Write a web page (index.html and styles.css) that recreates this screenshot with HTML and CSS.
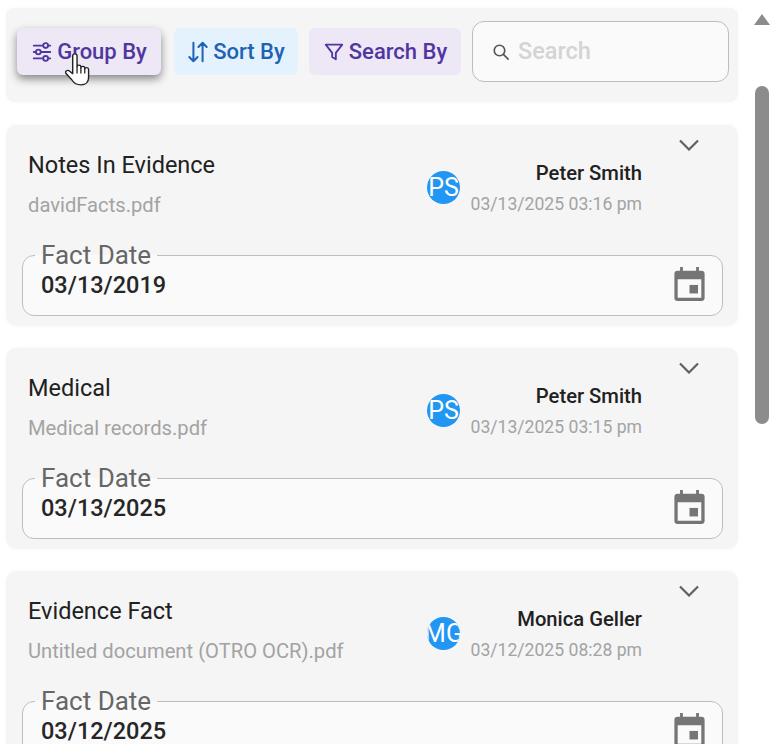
FILE: index.html
```html
<!DOCTYPE html>
<html lang="en">
<head>
<meta charset="utf-8">
<title>Facts</title>
<link rel="stylesheet" href="styles.css">
</head>
<body>
<div class="page">
  <main class="content">
    <div class="toolbar">
      <button class="btn btn-purple btn-raised">
        <svg class="btn-icon" viewBox="0 0 24 24" fill="none" stroke="currentColor" stroke-width="2" stroke-linecap="round"><path d="M3 5h10M19 5h2M3 12h2M11 12h10M3 19h10M19 19h2"/><circle cx="16" cy="5" r="2.6"/><circle cx="8" cy="12" r="2.6"/><circle cx="16" cy="19" r="2.6"/></svg>
        Group By
      </button>
      <button class="btn btn-blue btn-sort">
        <svg class="btn-icon" viewBox="0 0 24 24" fill="none" stroke="currentColor" stroke-width="2.2" stroke-linecap="round" stroke-linejoin="round"><path d="M7 2v20M2.5 17.5 7 22l4.500-4.500M17 22V2M12.500 6.500 17 2l4.500 4.500"/></svg>
        Sort By
      </button>
      <button class="btn btn-purple btn-search">
        <svg class="btn-icon" viewBox="0 0 24 24" fill="none" stroke="currentColor" stroke-width="2" stroke-linejoin="round"><path d="M3 4h18l-7 9v7l-4-2.500V13z"/></svg>
        Search By
      </button>
      <label class="search">
        <svg class="search-icon" viewBox="0 0 24 24" fill="none" stroke="#555" stroke-width="2.200" stroke-linecap="round"><circle cx="10" cy="10" r="7"/><path d="m15.500 15.500 6 6"/></svg>
        <span class="search-text">Search</span>
      </label>
    </div>

    <section class="card">
      <div class="card-head">
        <div class="card-title">
          <div class="title">Notes In Evidence</div>
          <div class="file">davidFacts.pdf</div>
        </div>
        <div class="avatar">PS</div>
        <div class="meta">
          <div class="name">Peter Smith</div>
          <div class="time">03/13/2025 03:16 pm</div>
        </div>
        <svg class="chevron" viewBox="0 0 20 12" fill="none" stroke="#616161" stroke-width="2.200"><path d="m1 1.500 9 9 9-9"/></svg>
      </div>
      <fieldset class="field">
        <legend>Fact Date</legend>
        <div class="field-row">
          <span class="value">03/13/2019</span>
          <svg class="cal" viewBox="0 0 32 36" fill="#757575"><path fill-rule="evenodd" d="M6 0h3v4h14V0h3v4h2.500A3.500 3.500 0 0 1 32 7.500v25a3.500 3.500 0 0 1-3.500 3.500h-25A3.500 3.500 0 0 1 0 32.500v-25A3.500 3.500 0 0 1 3.500 4H6zM3.500 13v19.500h25V13z"/><rect x="16" y="19" width="9" height="9"/></svg>
        </div>
      </fieldset>
    </section>

    <section class="card">
      <div class="card-head">
        <div class="card-title">
          <div class="title">Medical</div>
          <div class="file">Medical records.pdf</div>
        </div>
        <div class="avatar">PS</div>
        <div class="meta">
          <div class="name">Peter Smith</div>
          <div class="time">03/13/2025 03:15 pm</div>
        </div>
        <svg class="chevron" viewBox="0 0 20 12" fill="none" stroke="#616161" stroke-width="2.200"><path d="m1 1.500 9 9 9-9"/></svg>
      </div>
      <fieldset class="field">
        <legend>Fact Date</legend>
        <div class="field-row">
          <span class="value">03/13/2025</span>
          <svg class="cal" viewBox="0 0 32 36" fill="#757575"><path fill-rule="evenodd" d="M6 0h3v4h14V0h3v4h2.500A3.500 3.500 0 0 1 32 7.500v25a3.500 3.500 0 0 1-3.500 3.500h-25A3.500 3.500 0 0 1 0 32.500v-25A3.500 3.500 0 0 1 3.500 4H6zM3.500 13v19.500h25V13z"/><rect x="16" y="19" width="9" height="9"/></svg>
        </div>
      </fieldset>
    </section>

    <section class="card">
      <div class="card-head">
        <div class="card-title">
          <div class="title">Evidence Fact</div>
          <div class="file">Untitled document (OTRO OCR).pdf</div>
        </div>
        <div class="avatar avatar-mg">MG</div>
        <div class="meta">
          <div class="name">Monica Geller</div>
          <div class="time">03/12/2025 08:28 pm</div>
        </div>
        <svg class="chevron" viewBox="0 0 20 12" fill="none" stroke="#616161" stroke-width="2.200"><path d="m1 1.500 9 9 9-9"/></svg>
      </div>
      <fieldset class="field">
        <legend>Fact Date</legend>
        <div class="field-row">
          <span class="value">03/12/2025</span>
          <svg class="cal" viewBox="0 0 32 36" fill="#757575"><path fill-rule="evenodd" d="M6 0h3v4h14V0h3v4h2.500A3.500 3.500 0 0 1 32 7.500v25a3.500 3.500 0 0 1-3.500 3.500h-25A3.500 3.500 0 0 1 0 32.500v-25A3.500 3.500 0 0 1 3.500 4H6zM3.500 13v19.500h25V13z"/><rect x="16" y="19" width="9" height="9"/></svg>
        </div>
      </fieldset>
    </section>
  </main>

  <aside class="scrollbar">
    <div class="arrow"></div>
    <div class="thumb"></div>
  </aside>

  <svg class="cursor" viewBox="1 1 19.500 29" preserveAspectRatio="none"><path d="M7 3.500c0-2.400 3.400-2.400 3.400 0V13c0-1.800 3-1.800 3 0v1c0-1.700 3-1.700 3 0v1c0-1.600 3-1.600 3 .4v7.100c0 4-2.300 6.500-6 6.500-3.600 0-5.300-1.400-7-4.300L1.800 19c-1.200-2.200 1.300-3.600 2.900-2L7 19.200z" fill="#fff" stroke="#222" stroke-width="1.100" stroke-linejoin="round"/><path d="M10.400 13v6M13.400 14v5M16.400 15v4" stroke="#222" stroke-width="1" fill="none"/></svg>
</div>
</body>
</html>
```
FILE: styles.css
```css
* { box-sizing: border-box; }
html, body { margin: 0; height: 100%; background: #fff; overflow: hidden; }
body { font-family: Roboto, "Liberation Sans", sans-serif; color: #212121; }

.page {
  position: relative;
  width: 776px;
  height: 744px;
  display: flex;
  overflow: hidden;
}

.content {
  width: 732px;
  margin-left: 6px;
  padding-top: 8px;
  display: flex;
  flex-direction: column;
  gap: 22px;
  flex: none;
}

.toolbar {
  flex: none;
  height: 94px;
  margin-bottom: 1px;
  background: #f5f5f5;
  border-radius: 8px;
  padding: 13px 9px 0 11px;
  display: flex;
  align-items: flex-start;
  box-shadow: 0 0 4px rgba(0, 0, 0, .03);
}

.btn {
  height: 47px;
  margin-top: 7px;
  border: 0;
  border-radius: 6px;
  padding: 0;
  display: flex;
  align-items: center;
  justify-content: center;
  gap: 4px;
  font: 500 22px/1 Roboto, sans-serif;
  flex: none;
}
.btn-purple { background: #ede7f6; color: #51369f; }
.btn-blue { background: #e3f2fd; color: #1e63b4; }
.btn-raised { width: 144px; box-shadow: 0 4px 8px rgba(0, 0, 0, .45); }
.btn-sort { width: 124px; margin-left: 13px; }
.btn-search { width: 152px; margin-left: 11px; }
.btn-icon { width: 22px; height: 24px; flex: none; }

.search {
  flex: none;
  width: 257px;
  height: 61px;
  margin-left: 11px;
  background: #fafafa;
  border: 1px solid #bdbdbd;
  border-radius: 12px;
  display: flex;
  align-items: center;
  padding-left: 19px;
  gap: 8px;
}
.search-icon { width: 18px; height: 18px; flex: none; }
.search-text { margin-top: -2px; font-size: 23.5px; font-weight: 500; color: #d4d4d4; }

.card {
  flex: none;
  height: 201px;
  background: #f5f5f5;
  border-radius: 10px;
  padding: 0 15px 0 16px;
  box-shadow: 0 0 4px rgba(0, 0, 0, .03);
}

.card-head {
  height: 118px;
  display: grid;
  grid-template-columns: 399px 33px 1fr 20px;
  padding: 0 24px 0 6px;
}

.card-title { padding-top: 26px; }
.title { font-size: 23.5px; line-height: 28px; }
.file { margin-top: 14px; font-size: 20.2px; line-height: 24px; color: #a3a3a3; white-space: nowrap; }

.avatar {
  width: 33px;
  height: 33px;
  margin-top: 46px;
  border-radius: 50%;
  background: #2196f3;
  color: #fff;
  font-size: 25px;
  line-height: 34px;
  overflow: hidden;
  white-space: nowrap;
  display: flex;
  justify-content: center;
}

.meta { padding: 36px 0 0; margin-right: 37px; text-align: right; }
.name { font-size: 20.2px; line-height: 24px; font-weight: 500; }
.time { margin-top: 7px; font-size: 17.6px; line-height: 24px; color: #a3a3a3; white-space: nowrap; }

.chevron { width: 20px; height: 12px; margin-top: 14px; }

.field {
  margin: 0;
  min-width: 0;
  height: 73px;
  padding: 0 17px 0 12px;
  background: #fafafa;
  border: 1px solid #bdbdbd;
  border-radius: 12px;
}
.field legend {
  padding: 0 6px;
  height: 24px;
  font-size: 26px;
  line-height: 24px;
  color: #666;
}
.field-row {
  display: flex;
  justify-content: space-between;
  align-items: center;
  height: 36px;
}
.value { padding-left: 6px; font-size: 23.5px; font-weight: 500; color: #262626; }
.cal { width: 31px; height: 34px; flex: none; margin-top: -2px; }

.scrollbar {
  flex: none;
  margin-left: 16px;
  width: 16px;
  display: flex;
  flex-direction: column;
  align-items: center;
}
.arrow {
  margin-top: 14px;
  width: 0;
  height: 0;
  border-left: 8px solid transparent;
  border-right: 8px solid transparent;
  border-bottom: 11px solid #8c8c8c;
}
.thumb {
  margin-top: 61px;
  width: 14px;
  height: 338px;
  background: #8c8c8c;
  border-radius: 7px;
}

.cursor {
  position: absolute;
  left: 65px;
  top: 53px;
  width: 25px;
  height: 33px;
}
```
